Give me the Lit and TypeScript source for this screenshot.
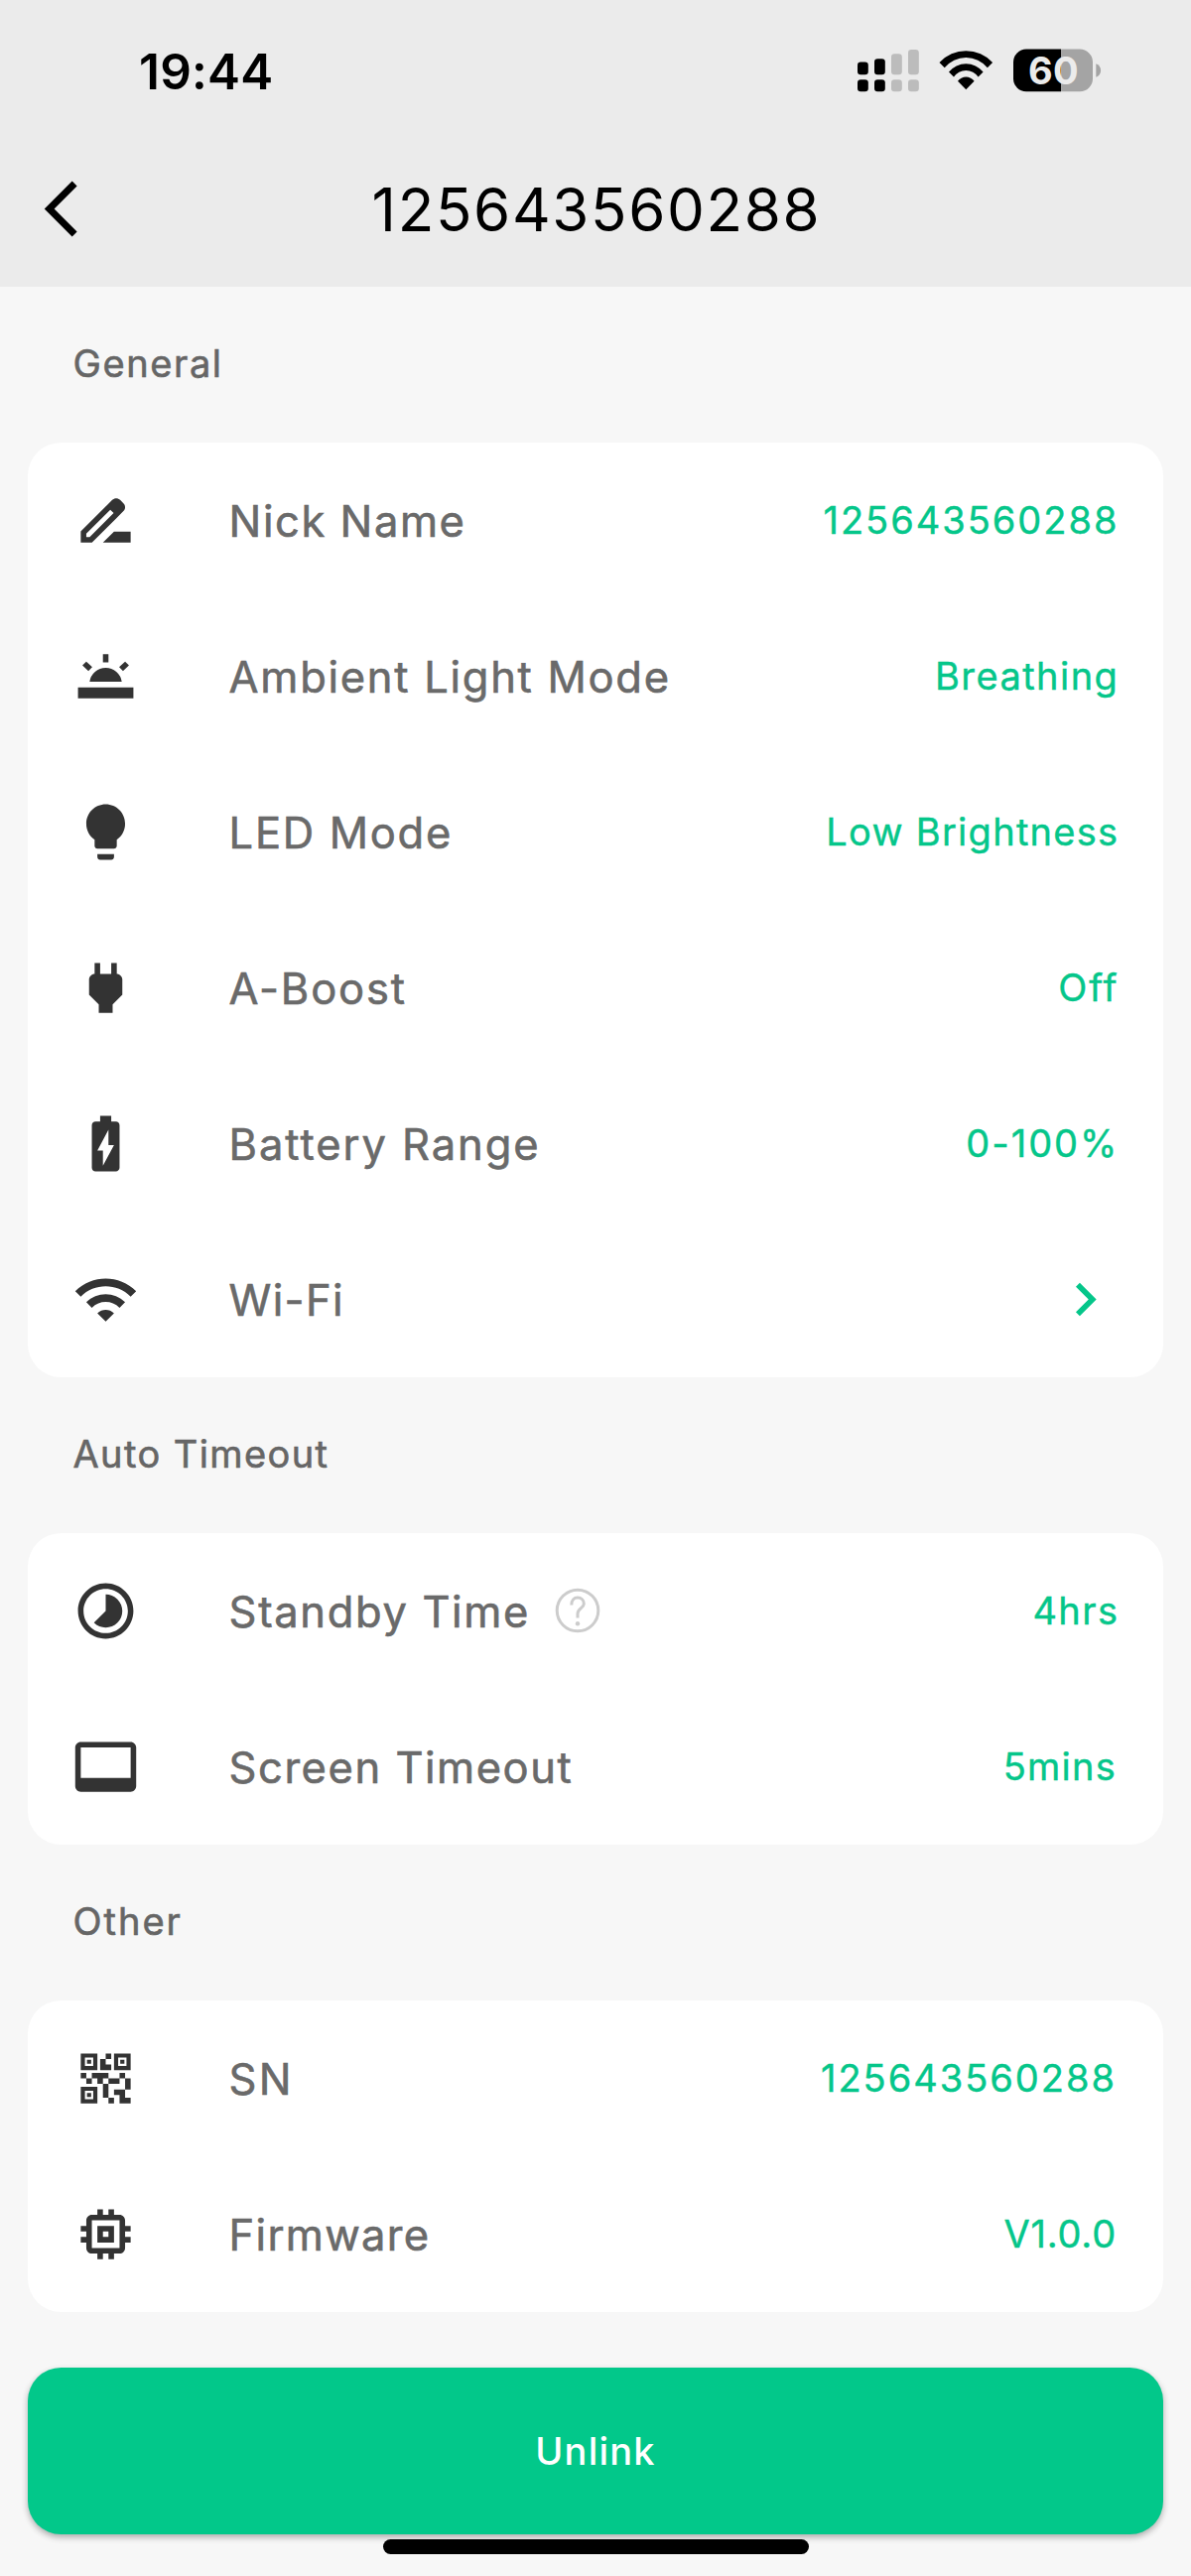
import { LitElement, html, css, svg, nothing } from "lit";
import { customElement, property } from "lit/decorators.js";

interface Row {
  icon: string;
  label: string;
  labelTracking: number;
  value?: string;
  valueTracking?: number;
  inset?: boolean;
  help?: boolean;
}

interface Section {
  title: string;
  tracking: number;
  rows: Row[];
}

// 24-unit icon outlines
const ICONS: Record<string, string> = {
  back: "M17.77 3.77 16 2 6 12l10 10 1.77-1.77L9.54 12z",
  next: "M10 6 8.59 7.41 13.17 12l-4.58 4.59L10 18l6-6z",
  rename:
    "M18.41 5.8 17.2 4.59c-.78-.78-2.05-.78-2.83 0l-2.68 2.68L3 15.96V20h4.04l8.74-8.74 2.63-2.63c.79-.78.79-2.05 0-2.83zM6.21 18H5v-1.21l8.66-8.66 1.21 1.21L6.21 18zM11 20l4-4h6v4H11z",
  ambient:
    "M2 16h20v4H2zM6.2 14A5.86 5.86 0 0 1 17.8 14zM11 4h2v3h-2zM5 6.7 3.6 8.1 5.75 10.1 7.15 8.7zM19 6.7 20.4 8.1 18.25 10.1 16.85 8.7z",
  bulb: "M9 21c0 .55.45 1 1 1h4c.55 0 1-.45 1-1v-1H9v1zm3-19C8.14 2 5 5.14 5 9c0 2.38 1.19 4.47 3 5.74V17c0 .55.45 1 1 1h6c.55 0 1-.45 1-1v-2.26c1.81-1.27 3-3.36 3-5.74 0-3.86-3.14-7-7-7z",
  plug: "M16.01 7L16 3h-2v4h-4V3H8v4h-.01C7 6.99 6 7.99 6 8.99v5.49L9.5 18v3h5v-3l3.5-3.51v-5.5c0-1-1-2-1.99-1.99z",
  battery:
    "M15.67 4H14V2h-4v2H8.33C7.6 4 7 4.6 7 5.33v15.33C7 21.4 7.6 22 8.33 22h7.33c.74 0 1.34-.6 1.34-1.33V5.33C17 4.6 16.4 4 15.67 4zM11 20v-5.5H9L13 7v5.5h2L11 20z",
  wifi: "M1 9l2 2c4.97-4.97 13.03-4.97 18 0l2-2C16.93 2.93 7.08 2.93 1 9zm8 8l3 3 3-3c-1.65-1.66-4.34-1.66-6 0zm-4-4l2 2c2.76-2.76 7.24-2.76 10 0l2-2C15.14 9.14 8.87 9.14 5 13z",
  timelapse:
    "M16.24 7.76C15.07 6.59 13.54 6 12 6v6l-4.24 4.24c2.34 2.34 6.14 2.34 8.49 0 2.34-2.34 2.34-6.14-.01-8.48zM12 2C6.48 2 2 6.48 2 12s4.48 10 10 10 10-4.48 10-10S17.52 2 12 2zm0 18c-4.42 0-8-3.58-8-8s3.58-8 8-8 8 3.58 8 8-3.58 8-8 8z",
  screen:
    "M21 3H3c-1.1 0-2 .9-2 2v14c0 1.1.9 2 2 2h18c1.1 0 2-.9 2-2V5c0-1.1-.9-2-2-2zm0 13H3V5h18v11z",
  qr: "M15,21h-2v-2h2V21z M13,14h-2v5h2V14z M21,12h-2v4h2V12z M19,10h-2v2h2V10z M7,12H5v2h2V12z M5,10H3v2h2V10z M12,5h2V3h-2V5z M4.5,4.5v3h3v-3H4.5z M9,9H3V3h6V9z M4.5,16.5v3h3v-3H4.5z M9,21H3v-6h6V21z M16.5,4.5v3h3v-3H16.5z M21,9h-6V3h6V9z M19,19v-3l-4,0v2h2v3h4v-2H19z M17,12l-4,0v2h4V12z M13,10H7v2h2v2h2v-2h2V10z M14,9V7h-2V5h-2v4L14,9z M6.75,5.25h-1.5v1.5h1.5V5.25z M6.75,17.25h-1.5v1.5h1.5V17.25z M18.75,5.25h-1.5v1.5h1.5V5.25z",
  chip: "M15 9H9v6h6V9zm-2 4h-2v-2h2v2zm8-2V9h-2V7c0-1.1-.9-2-2-2h-2V3h-2v2h-2V3H9v2H7c-1.1 0-2 .9-2 2v2H3v2h2v2H3v2h2v2c0 1.1.9 2 2 2h2v2h2v-2h2v2h2v-2h2c1.1 0 2-.9 2-2v-2h2v-2h-2v-2h2zm-4 6H7V7h10v10z",
};

const SECTIONS: Section[] = [
  {
    title: "General",
    tracking: 1.6,
    rows: [
      { icon: "rename", label: "Nick Name", labelTracking: 1.55, value: "125643560288", valueTracking: 1.98 },
      { icon: "ambient", label: "Ambient Light Mode", labelTracking: 1.72, value: "Breathing", valueTracking: 1.47 },
      { icon: "bulb", label: "LED Mode", labelTracking: 1.7, value: "Low Brightness", valueTracking: 1.27 },
      { icon: "plug", label: "A-Boost", labelTracking: 1.85, value: "Off", valueTracking: 1.8 },
      { icon: "battery", label: "Battery Range", labelTracking: 1.93, value: "0-100%", valueTracking: 2 },
      { icon: "wifi", label: "Wi-Fi", labelTracking: 1.3 },
    ],
  },
  {
    title: "Auto Timeout",
    tracking: 1.4,
    rows: [
      { icon: "timelapse", label: "Standby Time", labelTracking: 1.65, value: "4hrs", valueTracking: 1.4, help: true },
      { icon: "screen", label: "Screen Timeout", labelTracking: 1.53, value: "5mins", valueTracking: 1.2, inset: true },
    ],
  },
  {
    title: "Other",
    tracking: 2,
    rows: [
      { icon: "qr", label: "SN", labelTracking: 2.2, value: "125643560288", valueTracking: 1.98, inset: true },
      { icon: "chip", label: "Firmware", labelTracking: 1.3, value: "V1.0.0", valueTracking: 0.8, inset: true },
    ],
  },
];

@customElement("glyph-icon")
export class GlyphIcon extends LitElement {
  @property() name = "";

  static styles = css`
    :host {
      display: block;
      flex: none;
      width: 67px;
      height: 67px;
    }
    .glyph {
      display: block;
      width: 100%;
      height: 100%;
      fill: currentColor;
    }
  `;

  render() {
    return html`<svg class="glyph" viewBox="0 0 24 24" aria-hidden="true">
      <path d=${ICONS[this.name] ?? ""}></path>
    </svg>`;
  }
}

@customElement("status-bar")
export class StatusBar extends LitElement {
  static styles = css`
    :host {
      display: flex;
      align-items: center;
      justify-content: space-between;
      box-sizing: border-box;
      height: 133px;
      padding: 9px 90px 0 140px;
      color: #000;
    }
    .time {
      padding-top: 1px;
      font-size: 49.5px;
      font-weight: 600;
      line-height: 60px;
      letter-spacing: 0.2px;
    }
    .indicators {
      display: block;
      width: 246px;
      height: 44px;
    }
    .dim {
      fill: #bcbcbc;
    }
    .empty {
      fill: #a4a4a4;
    }
    .level {
      fill: #ebebeb;
      font-family: Inter, "Liberation Sans", sans-serif;
      font-size: 38px;
      font-weight: 700;
      letter-spacing: 0.4px;
    }
  `;

  render() {
    const bars = [
      { x: 864, top: 62.3, on: true },
      { x: 881, top: 59, on: true },
      { x: 898, top: 54, on: false },
      { x: 915, top: 49.7, on: false },
    ];
    return html`
      <span class="time">19:44</span>
      <svg class="indicators" viewBox="864 48.7 246 44">
        ${bars.map(
          (b) => svg`<g class=${b.on ? "lit" : "dim"}>
            <rect x=${b.x} y=${b.top} width="10.8" height=${75 - b.top} rx="3.2"></rect>
            <rect x=${b.x} y="80" width="10.8" height="12" rx="3.2"></rect>
          </g>`
        )}
        <path d="M946.5 62.7A36.4 36.4 0 0 1 1000.1 62.7L994.9 68A27.9 27.9 0 0 0 951.7 68Z"></path>
        <path d="M956 72.3A22.2 22.2 0 0 1 990.6 72.3L985.6 77.3A14.7 14.7 0 0 0 961 77.3Z"></path>
        <path d="M965 81.5A10.2 10.2 0 0 1 981.6 81.5L973.3 90Z"></path>
        <path d="M1069 49.3H1034A13 13 0 0 0 1021 62.3V79A13 13 0 0 0 1034 92H1069Z"></path>
        <path class="empty" d="M1069 49.3H1088A13 13 0 0 1 1101 62.3V79A13 13 0 0 1 1088 92H1069Z"></path>
        <path class="empty" d="M1104.3 64C1107.2 65 1109.1 67.5 1109.1 70.7S1107.2 76.4 1104.3 77.4Z"></path>
        <text class="level" x="1036" y="84.5">60</text>
      </svg>
    `;
  }
}

@customElement("setting-row")
export class SettingRow extends LitElement {
  @property({ attribute: false }) row!: Row;

  static styles = css`
    :host {
      display: flex;
      align-items: center;
      box-sizing: border-box;
      height: 157px;
      padding: 0 44.6px;
    }
    .icon {
      color: #333;
    }
    .label {
      padding: 0 0 0 91px;
      color: #6a6a6a;
      font-size: 43.5px;
      font-weight: 400;
      line-height: 52px;
      white-space: nowrap;
      -webkit-text-stroke: 0.6px currentColor;
    }
    .help {
      flex: none;
      width: 46px;
      height: 46px;
      margin: 0 0 1px 25px;
      fill: none;
      stroke: #ccc;
      stroke-width: 3;
    }
    .dot {
      fill: #ccc;
      stroke: none;
    }
    .value,
    .next {
      margin-left: auto;
      color: #05c68a;
    }
    .value {
      padding-bottom: 1px;
      font-size: 38px;
      font-weight: 400;
      line-height: 46px;
      white-space: nowrap;
      -webkit-text-stroke: 0.4px currentColor;
    }
    .inset {
      padding-right: 2.5px;
    }
  `;

  render() {
    const r = this.row;
    return html`
      <glyph-icon class="icon" .name=${r.icon}></glyph-icon>
      <span class="label" style="letter-spacing:${r.labelTracking}px">${r.label}</span>
      ${r.help
        ? html`<svg class="help" viewBox="-23 -23 46 46">
            <circle r="20.8"></circle>
            <path d="M-6.2 -5.6C-6.2 -10.2 -3.6 -12.9 0 -12.9S6.3 -10.2 6.3 -6.8C6.3 -2.4 0 -2.2 0 3.2V7.6"></path>
            <circle class="dot" cy="13.3" r="2.2"></circle>
          </svg>`
        : nothing}
      ${r.value
        ? html`<span class="value ${r.inset ? "inset" : ""}" style="letter-spacing:${r.valueTracking ?? 0}px">${r.value}</span>`
        : html`<glyph-icon class="next" name="next"></glyph-icon>`}
    `;
  }
}

@customElement("app-root")
export class AppRoot extends LitElement {
  static styles = css`
    :host {
      display: flex;
      flex-direction: column;
      box-sizing: border-box;
      width: 1200px;
      height: 2596px;
      overflow: hidden;
      background: #f7f7f7;
      font-family: Inter, "Liberation Sans", sans-serif;
    }
    .header {
      flex: none;
      height: 289px;
      background: #ebebeb;
    }
    .toolbar {
      display: grid;
      grid-template-columns: 67px 1fr 67px;
      align-items: center;
      height: 155px;
      padding: 0 28px;
      color: #000;
    }
    .title {
      margin: 0;
      padding-left: 2px;
      text-align: center;
      font-size: 60px;
      font-weight: 400;
      line-height: 72px;
      letter-spacing: 1.66px;
    }
    .content {
      display: flex;
      flex-direction: column;
      padding: 0 28px;
    }
    .section-title {
      box-sizing: border-box;
      height: 157px;
      margin: 0;
      padding: 54px 0 0 45.5px;
      color: #666;
      font-size: 38px;
      font-weight: 400;
      line-height: 46px;
      -webkit-text-stroke: 0.6px currentColor;
    }
    .card {
      border-radius: 33.5px;
      background: #fff;
    }
    .unlink {
      display: block;
      width: 1144px;
      height: 168.5px;
      margin: 55.5px 0 0;
      padding: 0;
      border: 0;
      border-radius: 33.5px;
      background: #02c88a;
      box-shadow: 0 3px 6px rgba(0, 0, 0, 0.3);
      color: #fff;
      font: 500 38px/46px Inter, "Liberation Sans", sans-serif;
      letter-spacing: 1.2px;
    }
    .home {
      flex: none;
      align-self: center;
      width: 429px;
      height: 15px;
      margin-top: 5px;
      border-radius: 7.5px;
      background: #000;
    }
  `;

  render() {
    return html`
      <header class="header">
        <status-bar></status-bar>
        <div class="toolbar">
          <glyph-icon name="back"></glyph-icon>
          <h1 class="title">125643560288</h1>
        </div>
      </header>
      <main class="content">
        ${SECTIONS.map(
          (s) => html`
            <h2 class="section-title" style="letter-spacing:${s.tracking}px">${s.title}</h2>
            <section class="card">
              ${s.rows.map((r) => html`<setting-row .row=${r}></setting-row>`)}
            </section>
          `
        )}
        <button class="unlink" type="button">Unlink</button>
      </main>
      <div class="home"></div>
    `;
  }
}
